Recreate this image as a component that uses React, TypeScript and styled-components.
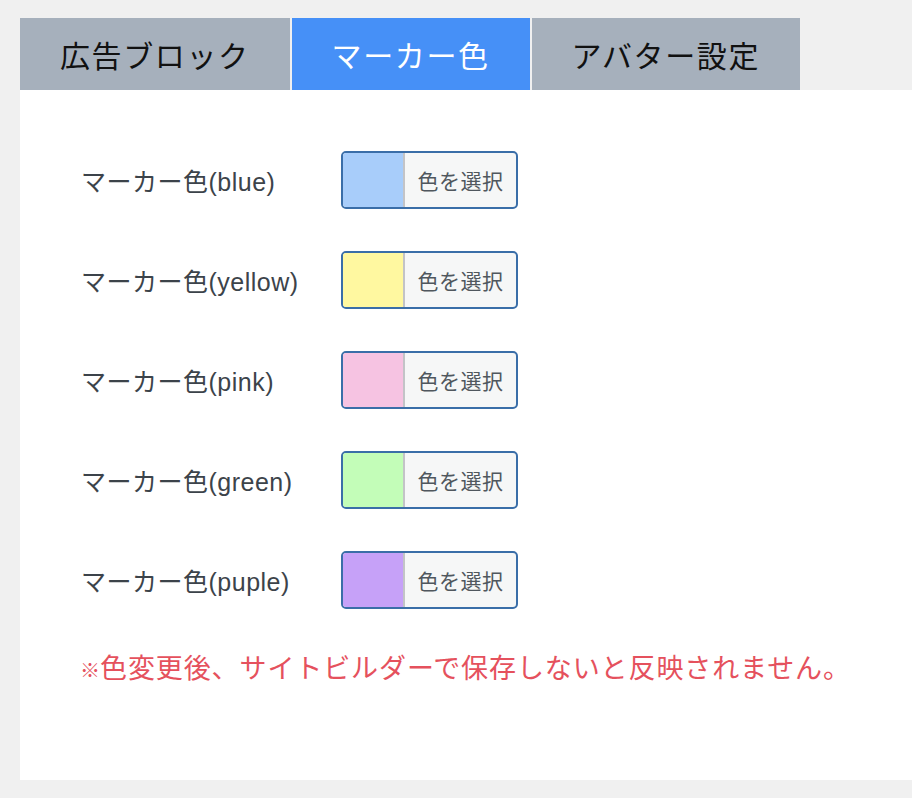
import React, { useState } from 'react';
import styled, { createGlobalStyle } from 'styled-components';

const GlobalStyle = createGlobalStyle`
  html, body {
    margin: 0;
    padding: 0;
    background: #f0f0f0;
  }
  body {
    font-family: "Noto Sans", "Noto Sans CJK JP", sans-serif;
  }
`;

const Page = styled.div`
  padding: 18px 0 18px 20px;
`;

const TabBar = styled.div`
  display: flex;
  gap: 2px;
  background: #f0f0f0;
`;

const Tab = styled.button<{ active: boolean }>`
  height: 72px;
  padding: 0 40px;
  border: none;
  margin: 0;
  font-family: "Noto Sans CJK JP", sans-serif;
  font-size: 30px;
  letter-spacing: 1.6px;
  cursor: pointer;
  background: ${({ active }) => (active ? '#4690f7' : '#a6b0bc')};
  color: ${({ active }) => (active ? '#ffffff' : '#111111')};
`;

const Panel = styled.div`
  background: #ffffff;
  height: 690px;
  box-sizing: border-box;
  padding: 61px 0 0 60px;
`;

const Rows = styled.div`
  display: flex;
  flex-direction: column;
  gap: 42px;
`;

const Row = styled.div`
  display: grid;
  grid-template-columns: 261px auto;
  align-items: center;
`;

const Label = styled.span`
  font-family: "Liberation Sans", "Noto Sans CJK JP", sans-serif;
  font-size: 25px;
  letter-spacing: 0.5px;
  color: #3c434a;
  padding-left: 1px;
`;

const PickerButton = styled.button`
  display: flex;
  align-items: stretch;
  width: 177px;
  height: 58px;
  padding: 0;
  border: 2px solid #3a6ea8;
  border-radius: 5px;
  background: #f6f7f7;
  overflow: hidden;
  cursor: pointer;
`;

const Swatch = styled.span<{ color: string }>`
  width: 60px;
  background: ${({ color }) => color};
  border-right: 2px solid #c3c4c7;
`;

const PickerText = styled.span`
  flex: 1;
  display: flex;
  align-items: center;
  justify-content: center;
  font-family: "Noto Sans CJK JP", sans-serif;
  font-size: 21px;
  letter-spacing: 0.5px;
  color: #50575e;
`;

const Notice = styled.p`
  margin: 38px 0 0;
  font-family: "Noto Sans CJK JP", sans-serif;
  font-size: 27px;
  letter-spacing: 0.9px;
  color: #e5515d;
`;

const Mark = styled.span`
  font-size: 20px;
  font-weight: bold;
  letter-spacing: 0;
`;

const tabs = ['広告ブロック', 'マーカー色', 'アバター設定'];

const markers = [
  { name: 'blue', color: '#a8cdfa' },
  { name: 'yellow', color: '#fff8a0' },
  { name: 'pink', color: '#f6c3e2' },
  { name: 'green', color: '#c3fdb8' },
  { name: 'puple', color: '#c6a1f8' },
];

export default function App() {
  const [active, setActive] = useState(1);

  return (
    <Page>
      <GlobalStyle />
      <TabBar>
        {tabs.map((t, i) => (
          <Tab key={t} active={i === active} onClick={() => setActive(i)}>
            {t}
          </Tab>
        ))}
      </TabBar>
      <Panel>
        <Rows>
          {markers.map((m) => (
            <Row key={m.name}>
              <Label>マーカー色({m.name})</Label>
              <PickerButton>
                <Swatch color={m.color} />
                <PickerText>色を選択</PickerText>
              </PickerButton>
            </Row>
          ))}
        </Rows>
        <Notice>
          <Mark>※</Mark>色変更後、サイトビルダーで保存しないと反映されません。
        </Notice>
      </Panel>
    </Page>
  );
}
